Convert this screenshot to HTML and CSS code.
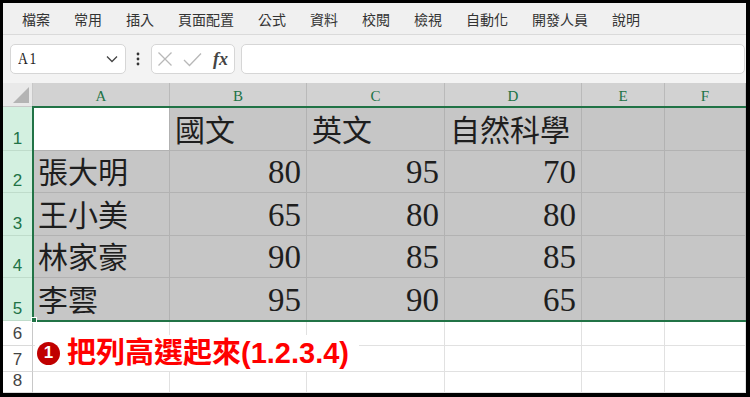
FILE: index.html
```html
<!DOCTYPE html>
<html lang="zh-Hant">
<head>
    <meta charset="UTF-8">
    <title>Excel - 選取列</title>
    <link rel="stylesheet" href="styles.css">
</head>
<body>
    <div class="frame">
        <!-- 功能表 -->
        <div class="menubar">
            <span>檔案</span>
            <span>常用</span>
            <span>插入</span>
            <span>頁面配置</span>
            <span>公式</span>
            <span>資料</span>
            <span>校閱</span>
            <span>檢視</span>
            <span>自動化</span>
            <span>開發人員</span>
            <span>說明</span>
        </div>

        <!-- 名稱方塊 / 資料編輯列 -->
        <div class="formulabar">
            <div class="namebox">
                <span class="ref">A1</span>
                <svg width="12" height="8" viewBox="0 0 12 8"><polyline points="1,1.5 6,6.5 11,1.5" fill="none" stroke="#444" stroke-width="1.3"/></svg>
            </div>
            <svg class="dots" width="6" height="16" viewBox="0 0 6 16"><circle cx="3" cy="3" r="1.4" fill="#333"/><circle cx="3" cy="8" r="1.4" fill="#333"/><circle cx="3" cy="13" r="1.4" fill="#333"/></svg>
            <div class="fxbox">
                <svg width="16" height="16" viewBox="0 0 16 16"><path d="M1.5 1.5 L14.5 14.5 M14.5 1.5 L1.5 14.5" stroke="#b8b8b8" stroke-width="1.3" fill="none"/></svg>
                <svg width="19" height="15" viewBox="0 0 19 15"><polyline points="1,8 6.5,13.5 18,1.5" stroke="#b8b8b8" stroke-width="1.3" fill="none"/></svg>
                <span class="fx">fx</span>
            </div>
            <div class="input"></div>
        </div>

        <!-- 工作表 -->
        <div class="sheet">
            <div class="corner"><span class="tri"></span></div>
            <div class="colhead">A</div>
            <div class="colhead">B</div>
            <div class="colhead">C</div>
            <div class="colhead">D</div>
            <div class="colhead">E</div>
            <div class="colhead">F</div>

            <div class="rowhead sel">1</div>
            <div class="cell active"></div>
            <div class="cell sel">國文</div>
            <div class="cell sel">英文</div>
            <div class="cell sel">自然科學</div>
            <div class="cell sel"></div>
            <div class="cell sel"></div>

            <div class="rowhead sel">2</div>
            <div class="cell sel">張大明</div>
            <div class="cell sel num">80</div>
            <div class="cell sel num">95</div>
            <div class="cell sel num">70</div>
            <div class="cell sel"></div>
            <div class="cell sel"></div>

            <div class="rowhead sel">3</div>
            <div class="cell sel">王小美</div>
            <div class="cell sel num">65</div>
            <div class="cell sel num">80</div>
            <div class="cell sel num">80</div>
            <div class="cell sel"></div>
            <div class="cell sel"></div>

            <div class="rowhead sel">4</div>
            <div class="cell sel">林家豪</div>
            <div class="cell sel num">90</div>
            <div class="cell sel num">85</div>
            <div class="cell sel num">85</div>
            <div class="cell sel"></div>
            <div class="cell sel"></div>

            <div class="rowhead sel">5</div>
            <div class="cell sel">李雲</div>
            <div class="cell sel num">95</div>
            <div class="cell sel num">90</div>
            <div class="cell sel num">65</div>
            <div class="cell sel"></div>
            <div class="cell sel"></div>

            <div class="rowhead">6</div>
            <div class="cell"></div><div class="cell"></div><div class="cell"></div>
            <div class="cell"></div><div class="cell"></div><div class="cell"></div>

            <div class="rowhead">7</div>
            <div class="cell"></div><div class="cell"></div><div class="cell"></div>
            <div class="cell"></div><div class="cell"></div><div class="cell"></div>

            <div class="rowhead">8</div>
            <div class="cell"></div><div class="cell"></div><div class="cell"></div>
            <div class="cell"></div><div class="cell"></div><div class="cell"></div>

            <!-- 選取範圍外框 -->
            <div class="selection"></div>
            <div class="handle"></div>

            <!-- 說明文字方塊 -->
            <div class="note">
                <span class="badge">1</span>
                <span class="note-text">把列高選起來(1.2.3.4)</span>
            </div>
        </div>
    </div>
</body>
</html>
```

FILE: styles.css
```css
:root {
    --green: #217346;
    --sel-bg: #c6c6c6;
    --sel-line: #b2b2b2;
    --grid: #e1e1e1;
    --head-bg: #d2d2d2;
    --row-sel: #d3f0e0;
}

html, body {
    margin: 0;
    background: #000;
}

body {
    width: 750px;
    height: 397px;
    overflow: hidden;
    padding: 3px 4px 4px 3px;
    box-sizing: border-box;
}

.frame {
    background: #f3f3f3;
    height: 390px;
    overflow: hidden;
    font-family: "Noto Sans CJK TC", "Liberation Sans", sans-serif;
}

/* 功能表 */
.menubar {
    height: 31px;
    border-bottom: 1px solid #dadada;
    background: #f0f0f0;
    display: flex;
    align-items: center;
    gap: 24px;
    padding-left: 19px;
    font-size: 14px;
    color: #333;
}

/* 資料編輯列 */
.formulabar {
    height: 48px;
    box-sizing: border-box;
    padding-top: 9px;
    display: flex;
    align-items: flex-start;
}

.namebox {
    margin-left: 7px;
    width: 116px;
    height: 30px;
    box-sizing: border-box;
    background: #fff;
    border: 1px solid #d6d6d6;
    border-radius: 5px;
    display: flex;
    align-items: center;
    justify-content: space-between;
    padding: 0 7px 0 7px;
}

.namebox .ref {
    font-family: "Liberation Serif", serif;
    font-size: 17px;
    color: #222;
    letter-spacing: 2px;
    transform: scaleX(0.8);
    transform-origin: left center;
}

.dots {
    margin: 7px 0 0 9px;
}

.fxbox {
    margin-left: 10px;
    width: 84px;
    height: 30px;
    box-sizing: border-box;
    background: #fff;
    border: 1px solid #d6d6d6;
    border-radius: 5px;
    display: flex;
    align-items: center;
    gap: 10px;
    padding-left: 5px;
}

.fx {
    font-family: "Liberation Serif", serif;
    font-style: italic;
    font-weight: bold;
    font-size: 18px;
    color: #444;
    margin-left: 1px;
}

.input {
    margin-left: 6px;
    flex: 1;
    height: 30px;
    box-sizing: border-box;
    background: #fff;
    border: 1px solid #d6d6d6;
    border-radius: 5px;
    margin-right: 1px;
}

/* 工作表 */
.sheet {
    position: relative;
    display: grid;
    grid-template-columns: 30px 137px 137px 138px 137px 83px 81px;
    grid-template-rows: 24px 44px 42px 43px 42px 43px 25px 26px 21px;
    background: #fff;
}

.sheet > div {
    box-sizing: border-box;
}

.corner {
    background: #e9e9e9;
    border-right: 1px solid #c8c8c8;
    border-bottom: 1px solid #c8c8c8;
    position: relative;
}

.corner .tri {
    position: absolute;
    right: 3px;
    bottom: 3px;
    width: 0;
    height: 0;
    border-left: 16px solid transparent;
    border-bottom: 16px solid #b4b4b4;
}

.colhead {
    background: var(--head-bg);
    border-right: 1px solid #bababa;
    border-bottom: 1px solid #bababa;
    color: var(--green);
    font-family: "Liberation Serif", serif;
    font-size: 15px;
    display: flex;
    justify-content: center;
    align-items: flex-end;
    padding-bottom: 1px;
}

.rowhead {
    background: #fff;
    border-right: 1px solid #c8c8c8;
    border-bottom: 1px solid #dadada;
    color: #444;
    font-family: "Liberation Sans", sans-serif;
    font-size: 17px;
    display: flex;
    justify-content: center;
    align-items: flex-end;
    line-height: 1;
    padding-bottom: 3px;
}

.rowhead.sel {
    background: var(--row-sel);
    color: var(--green);
    border-bottom-color: #bfdccb;
}

.cell {
    border-right: 1px solid var(--grid);
    border-bottom: 1px solid var(--grid);
    font-family: "Liberation Serif", "Noto Sans CJK TC", serif;
    font-size: 30px;
    color: #1e1e1e;
    display: flex;
    align-items: flex-end;
    line-height: 1;
    padding: 0 5px 4px 5px;
    white-space: nowrap;
    overflow: visible;
}

.cell.sel {
    background: var(--sel-bg);
    border-color: var(--sel-line);
}

.cell.active {
    background: #fff;
    border-color: var(--sel-line);
}

.cell.num {
    justify-content: flex-end;
    font-size: 33px;
    padding-bottom: 3px;
}

.selection {
    position: absolute;
    left: 29px;
    top: 23px;
    right: -3px;
    height: 216px;
    border: 2px solid var(--green);
    box-sizing: border-box;
    pointer-events: none;
}

.handle {
    position: absolute;
    left: 28px;
    top: 234px;
    width: 6px;
    height: 6px;
    background: var(--green);
    border: 1px solid #fff;
}

/* 說明文字 */
.note {
    position: absolute;
    left: 32px;
    top: 252px;
    height: 36px;
    padding: 0 10px 0 2px;
    background: #fff;
    display: flex;
    align-items: center;
    gap: 7px;
}

.badge {
    width: 23px;
    height: 23px;
    border-radius: 50%;
    background: #c00000;
    color: #fff;
    font-family: "Liberation Sans", sans-serif;
    font-weight: bold;
    font-size: 17px;
    display: flex;
    align-items: center;
    justify-content: center;
}

.note-text {
    color: #ff0000;
    font-family: "Liberation Sans", "Noto Sans CJK TC", sans-serif;
    font-weight: bold;
    font-size: 29px;
    line-height: 1;
}
```
